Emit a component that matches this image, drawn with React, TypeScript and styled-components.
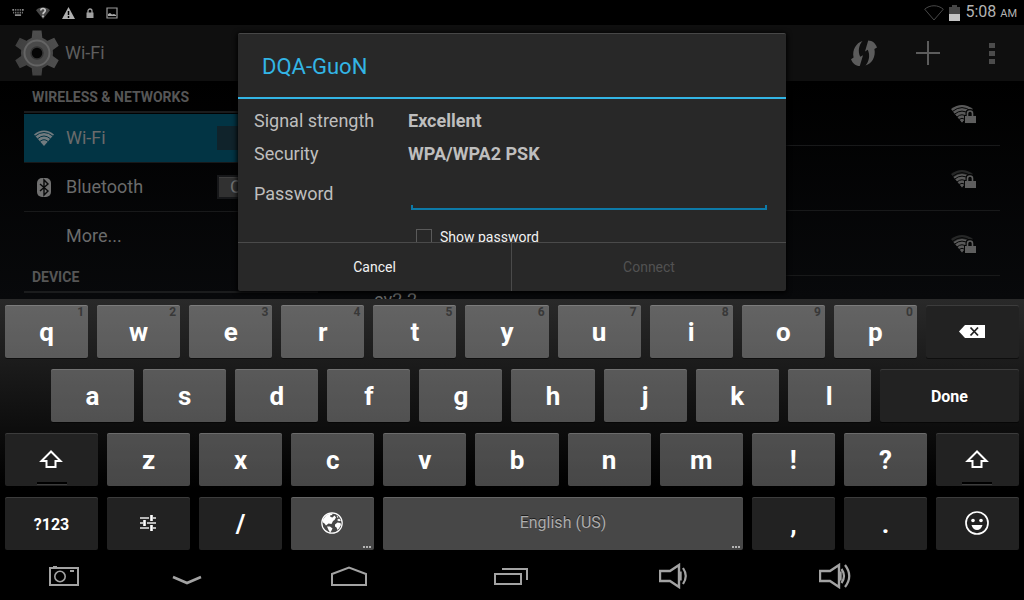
import React from "react";
import styled, { createGlobalStyle, css } from "styled-components";

const GlobalStyle = createGlobalStyle`
  *, *::before, *::after { box-sizing: border-box; }
  body {
    margin: 0;
    background: #000;
    font-family: Roboto, "Liberation Sans", sans-serif;
  }
  button, input { font: inherit; color: inherit; margin: 0; padding: 0; border: 0; background: none; }
  button { cursor: pointer; }
  svg { display: block; flex: none; }
  h1, h2, ul, dl, dd { margin: 0; padding: 0; font-weight: 400; }
  ul { list-style: none; }
`;

/* ---------- page frame ---------- */

const Device = styled.div`
  display: grid;
  grid-template-rows: auto 1fr auto auto;
  grid-template-columns: 100%;
  height: 100vh;
  overflow: hidden;
`;

const StatusBar = styled.header`
  display: flex;
  align-items: center;
  justify-content: space-between;
  height: 25px;
  padding: 0 7px 0 12px;
  color: #b4b4b4;
`;

const StatusGroup = styled.div<{ $gap: number }>`
  display: flex;
  align-items: center;
  gap: ${(p) => p.$gap}px;
`;

const StatusIcons = styled.div`
  display: grid;
  grid-template-columns: 12px 14px 12px 8px 12px;
  column-gap: 12px;
  align-items: center;
  justify-items: center;
`;

const Clock = styled.time`
  padding-top: 1px;
  font-size: 16px;
  line-height: 24px;
  small { font-size: 11px; }
`;

const Screen = styled.div`
  position: relative;
  min-height: 0;
  overflow: hidden;
  background: linear-gradient(#000 56px, #08090b);
`;

const ActionBar = styled.div`
  display: flex;
  align-items: center;
  justify-content: space-between;
  height: 56px;
  padding-left: 15px;
  background: #0f0f0f;
  color: #5e5e5e;
`;

const AppTitle = styled.h1`
  display: flex;
  align-items: center;
  gap: 6px;
  font-size: 18px;
  line-height: 24px;
`;

const Actions = styled.div`
  display: grid;
  grid-template-columns: repeat(3, 64px);
  height: 100%;
`;

const IconButton = styled.button`
  display: flex;
  align-items: center;
  justify-content: center;
`;

const Panes = styled.div`
  display: flex;
  padding: 0 24px;
`;

/* ---------- settings categories ---------- */

const Categories = styled.nav`
  flex: none;
  width: 294px;
`;

const CategoryHeading = styled.h2`
  height: 32px;
  padding: 0 8px;
  border-bottom: 2px solid #1b1c1d;
  color: #565656;
  font-size: 14px;
  font-weight: 700;
  line-height: 32px;
`;

const CategoryList = styled.ul`
  padding-bottom: 1px;
`;

const CategoryItem = styled.li<{ $active?: boolean; $first?: boolean }>`
  display: flex;
  align-items: center;
  justify-content: space-between;
  height: 49px;
  padding-right: 16px;
  border-top: 1px solid ${(p) => (p.$first ? "transparent" : "#18191a")};
  background: ${(p) => (p.$active ? "#023444" : "transparent")};
  background-clip: padding-box;
`;

const CategoryLink = styled.a`
  display: grid;
  grid-template-columns: 42px auto;
  align-items: center;
  color: #6a6b6b;
  font-size: 18px;
  line-height: 24px;
  text-decoration: none;
  svg { justify-self: center; margin-right: 2px; }
`;

const Toggle = styled.button<{ $on?: boolean }>`
  width: 85px;
  height: 24px;
  padding: 2px;
  background: ${(p) => (p.$on ? "#10232b" : "#17181a")};
  font-size: 18px;
  line-height: 20px;
`;

const ToggleThumb = styled.span`
  display: block;
  width: 44px;
  height: 20px;
  padding-left: 11px;
  background: #313131;
  border-top: 1px solid #404040;
  color: #707070;
  text-align: left;
  line-height: 18px;
`;

/* ---------- network list ---------- */

const Networks = styled.ul`
  flex: 1;
  padding-left: 56px;
`;

const Network = styled.li`
  display: flex;
  justify-content: space-between;
  height: 65px;
  padding: 12px 24px 0 0;
  border-bottom: 1px solid #18191a;
  color: #6a6b6b;
  font-size: 18px;
  line-height: 24px;
  svg { margin: 12px 0 0 auto; }
`;

/* ---------- dialog ---------- */

const Overlay = styled.div`
  position: absolute;
  inset: 0;
  display: flex;
  align-items: center;
  justify-content: center;
`;

const Dialog = styled.form`
  width: 548px;
  max-width: 100%;
  background: #282828;
  border-top: 1px solid #474747;
  border-radius: 2px;
  box-shadow: 0 1px 5px 1px #000;
  color: #bebebe;
  font-size: 18px;
  line-height: 24px;
`;

const DialogTitle = styled.h2`
  padding: 18px 24px 15px;
  border-bottom: 2px solid #33b5e5;
  color: #33b5e5;
  font-size: 22px;
  line-height: 30px;
`;

const DialogBody = styled.div`
  height: 143px;
  padding: 5px 16px 0;
  overflow: hidden;
`;

const fieldGrid = css`
  display: grid;
  grid-template-columns: 154px 1fr;
  align-items: center;
`;

const Facts = styled.dl`
  ${fieldGrid}
  grid-auto-rows: 33px;
  dd { font-weight: 700; }
`;

const PasswordRow = styled.div`
  ${fieldGrid}
  height: 48px;
`;

const PasswordInput = styled.input`
  height: 32px;
  margin: 0 3px;
  padding: 0 8px;
  outline: none;
  background:
    linear-gradient(#0d7aa8, #0d7aa8) left bottom / 100% 2px no-repeat,
    linear-gradient(#0d7aa8, #0d7aa8) left bottom / 2px 5px no-repeat,
    linear-gradient(#0d7aa8, #0d7aa8) right bottom / 2px 5px no-repeat;
`;

const ShowPassword = styled.label`
  display: flex;
  align-items: center;
  gap: 8px;
  height: 38px;
  padding-left: 162px;
  color: #f2f2f2;
  font-size: 14px;
`;

const Checkbox = styled.input`
  appearance: none;
  width: 16px;
  height: 16px;
  border: 1px solid #5a5a5a;
`;

const DialogButtons = styled.div`
  display: grid;
  grid-template-columns: 1fr 1fr;
  border-top: 1px solid #4a4a4a;
`;

const DialogButton = styled.button`
  height: 48px;
  color: #f2f2f2;
  font-size: 14px;
  &:first-child { border-right: 1px solid #4a4a4a; }
  &:disabled { color: #525252; cursor: default; }
`;

/* ---------- keyboard ---------- */

const Keyboard = styled.section`
  display: flex;
  flex-direction: column;
  gap: 11px;
  padding: 6px 5px 2px;
  background: linear-gradient(#292929, #000 190px);
`;

const KeyRow = styled.div<{ $indent?: boolean }>`
  display: flex;
  gap: 9px;
  padding-left: ${(p) => (p.$indent ? 46 : 0)}px;
`;

type KeyLook = { $weight?: number; $dark?: boolean; $small?: boolean };

const KeyCap = styled.button<KeyLook>`
  position: relative;
  display: flex;
  flex: ${(p) => p.$weight ?? 83} 1 0;
  align-items: center;
  justify-content: center;
  min-width: 0;
  height: 53px;
  border-radius: 2px;
  background: ${(p) => (p.$dark ? "#222" : "rgba(255, 255, 255, 0.28)")};
  box-shadow:
    inset 0 1px 0 rgba(255, 255, 255, ${(p) => (p.$dark ? 0.12 : 0.16)}),
    0 1px 0 rgba(0, 0, 0, 0.5);
  color: #fff;
  font-size: ${(p) => (p.$small ? 16 : 26)}px;
  font-weight: 700;
  line-height: 30px;
  padding-top: ${(p) => (p.$small ? 2 : 0)}px;
  svg { margin: 0 1px 1px 0; }
`;

const KeyHint = styled.span`
  position: absolute;
  top: 0;
  right: 4px;
  color: #383838;
  font-size: 12px;
  line-height: 14px;
`;

const LongPressDots = styled.span`
  position: absolute;
  right: 3px;
  bottom: 2px;
  display: flex;
  gap: 1px;
  &::before, &::after { content: ""; }
  &::before, &::after, i { width: 2px; height: 2px; background: #b4b4b4; }
`;

const ShiftMark = styled.span`
  position: absolute;
  bottom: 1px;
  left: 50%;
  width: 30px;
  height: 3px;
  margin-left: -15px;
  background: #000;
  border-bottom: 1px solid #3c3c3c;
`;

const SpaceLabel = styled.span`
  padding-bottom: 2px;
  color: #acacac;
  font-size: 16px;
  font-weight: 400;
  text-shadow: 0 -1px 0 #1c1c1c;
`;

/* ---------- navigation bar ---------- */

const NavBar = styled.nav`
  display: grid;
  grid-template-columns: 85fr repeat(5, 162fr);
  height: 48px;
  padding: 0 108px 0 21px;
  color: #a3a3a3;
`;

/* ---------- icons ---------- */

const GearIcon = () => (
  <svg width="44" height="46" viewBox="0 0 44 46" aria-hidden="true">
    <defs>
      <linearGradient id="gear" gradientUnits="userSpaceOnUse" x1="0" y1="0" x2="0" y2="46">
        <stop offset="0" stopColor="#4e4e4e" />
        <stop offset="1" stopColor="#404040" />
      </linearGradient>
      <path id="teeth" d="M17.500 .500h9l1 9h-11zM17.500 45.500h9l1-9h-11z" />
    </defs>
    <g fill="url(#gear)">
      <circle cx="22" cy="23" r="16" />
      <use href="#teeth" />
      <use href="#teeth" transform="rotate(60 22 23)" />
      <use href="#teeth" transform="rotate(120 22 23)" />
    </g>
    <circle cx="22" cy="23" r="12.500" fill="#4a4a4a" stroke="#646464" strokeWidth="2" />
    <circle cx="22" cy="23" r="6" fill="#050505" stroke="#333" strokeWidth="1.500" />
  </svg>
);

const KeyboardIcon = () => (
  <svg width="12" height="7" viewBox="0 0 13 8" aria-hidden="true" fill="#8a8a8a">
    <path d="M0 0h2v2H0zM3 0h1v2H3zM5 0h1v2H5zM7 0h1v2H7zM9 0h1v2H9zM11 0h2v2h-2zM1 3h1v2H1zM3 3h1v2H3zM5 3h1v2H5zM7 3h1v2H7zM9 3h1v2H9zM11 3h1v2h-1zM3 6h7v2H3z" />
  </svg>
);

const WifiQuestionIcon = () => (
  <svg width="14" height="12" viewBox="0 0 14 12" aria-hidden="true">
    <path d="M0 3.200C4-.600 10-.600 14 3.200L7 12z" fill="#484848" />
    <path d="M4.800 3.500C4.800 .800 9.200 .800 9.200 3.500 9.200 5.300 7 5.200 7 7.200M7 8.400v1.800" fill="none" stroke="#c4c4c4" strokeWidth="1.700" />
  </svg>
);

const WarningIcon = () => (
  <svg width="13" height="12" viewBox="0 0 13 12" aria-hidden="true">
    <path d="M6.500 0L13 12H0z" fill="#b0b0b0" />
    <path d="M6.500 4v4M6.500 9v2" stroke="#000" strokeWidth="1.500" />
  </svg>
);

const LockIcon = () => (
  <svg width="8" height="10" viewBox="0 0 8 10" aria-hidden="true">
    <path d="M2 5V3a2 2 0 0 1 4 0v2" fill="none" stroke="#a0a0a0" strokeWidth="1.300" />
    <path d="M.500 4.500h7V10h-7z" fill="#a0a0a0" />
  </svg>
);

const PictureIcon = () => (
  <svg width="12" height="12" viewBox="0 0 12 12" aria-hidden="true">
    <path d="M1 1h10v10H1z" fill="none" stroke="#9a9a9a" strokeWidth="1.200" />
    <path d="M2 9V7l2-1 2 1.500L8 7l2 1v1z" fill="#a8a8a8" />
  </svg>
);

const WifiOutlineIcon = () => (
  <svg width="20" height="16" viewBox="0 0 20 16" aria-hidden="true">
    <path d="M.700 4.200C6-.400 14-.400 19.300 4.200L10 15z" fill="none" stroke="#484848" />
  </svg>
);

const BatteryIcon = () => (
  <svg width="11" height="16" viewBox="0 0 11 16" aria-hidden="true">
    <path d="M3 0h5v2h3v7H0V2h3z" fill="#454545" />
    <path d="M0 9h11v7H0z" fill="#c2c2c2" />
  </svg>
);

const WpsIcon = () => (
  <svg width="27" height="27" viewBox="0 0 27 27" aria-hidden="true" fill="#5c5c5c">
    <path id="swoosh" d="M11.500 1C5 3 1 10 2.600 17.600L0 19.200C1.800 23.600 4.600 25.800 8.800 26L12 15.200 9.200 16.800C6.600 11 8 5 11.500 1z" />
    <use href="#swoosh" transform="rotate(180 13 13.300)" />
  </svg>
);

const PlusIcon = () => (
  <svg width="24" height="24" viewBox="0 0 24 24" aria-hidden="true">
    <path d="M12 0v24M0 12h24" stroke="#5c5c5c" strokeWidth="2" />
  </svg>
);

const OverflowIcon = () => (
  <svg width="6" height="21" viewBox="0 0 6 21" aria-hidden="true" fill="#4c4c4c">
    <path d="M0 0h6v5H0zM0 8h6v5H0zM0 16h6v5H0z" />
  </svg>
);

const WifiIcon = () => (
  <svg width="20" height="16" viewBox="0 0 20 16" aria-hidden="true">
    <path d="M0 4.500C6-1 14-1 20 4.500L10 16z" fill="#727b7f" />
    <path d="M1 6.200Q10-1.200 19 6.200M3.500 8.800Q10 3.200 16.500 8.800M6 11.400Q10 8 14 11.400" fill="none" stroke="#023444" />
  </svg>
);

const BluetoothIcon = () => (
  <svg width="14" height="19" viewBox="0 0 14 19" aria-hidden="true">
    <rect width="14" height="19" rx="5" fill="#707070" />
    <path d="M3 6l8 7-4 4V2l4 4-8 7" fill="none" stroke="#08090a" strokeWidth="1.400" />
  </svg>
);

const SecuredWifiIcon = ({ weak }: { weak?: boolean }) => (
  <svg width="25" height="19" viewBox="0 0 25 19" aria-hidden="true">
    <path d="M0 4Q11-4 22 4L11 17.500z" fill={weak ? "#262727" : "#5a5a5a"} />
    <path d="M2.500 7Q11 .800 19.500 7L11 17.500z" fill="#5a5a5a" />
    <path d="M1.500 6.400Q11-1.200 20.500 6.400M3.500 9.200Q11 3 18.500 9.200M6 12Q11 7.500 16 12M8 14.500Q11 12 14 14.500" fill="none" stroke="#050606" />
    <path d="M13 19v-9h1.500V8q0-4 4.500-4t4.500 4v2H25v9z" fill="#050606" />
    <path d="M16.500 12V8.500a2.500 2.500 0 0 1 5 0V12" fill="none" stroke="#5e5e5e" strokeWidth="1.600" />
    <path d="M14 11h11v7H14z" fill="#5e5e5e" />
  </svg>
);

const BackspaceIcon = () => (
  <svg width="26" height="13" viewBox="0 0 26 13" aria-hidden="true">
    <path d="M0 6.500L6 0h20v13H6z" fill="#fff" />
    <path d="M11.500 2.500l7.500 8M19 2.500l-7.500 8" stroke="#222" strokeWidth="1.800" />
  </svg>
);

const ShiftIcon = () => (
  <svg width="24" height="18" viewBox="0 0 24 18" aria-hidden="true">
    <path d="M12 1.500L2.500 11H7.500v6h9v-6h5z" fill="none" stroke="#fff" strokeWidth="2" />
  </svg>
);

const SlidersIcon = () => (
  <svg width="16" height="16" viewBox="0 0 16 16" aria-hidden="true">
    <path d="M0 3h9M13 3h3M0 8h3M7 8h9M0 13h9M13 13h3" stroke="#b8b8b8" strokeWidth="2" />
    <path d="M11.500 0v6M4.500 5v6M11.500 10v6" stroke="#fff" strokeWidth="2.600" />
  </svg>
);

const GlobeIcon = () => (
  <svg width="22" height="22" viewBox="0 0 22 22" aria-hidden="true">
    <circle cx="11" cy="11" r="10.200" fill="none" stroke="#fff" strokeWidth="1.200" />
    <path
      fill="#fff"
      d="M2 7.500L5 3.500 8.500 1.500 12 1.200 11 3 9 3.500 9.500 5 11.500 5.500 13.500 3.500 15 5.500 13.500 8 12 9 10.500 12 7.500 11.500 5 13.500 3.500 11.500 2 10.500zM6 14.500L9 14.500 11.500 16.500 10 19.500 9 20.500 7.500 18zM14 12.500L16.500 10.500 19.500 11 20 13 18 16.500 16.500 18 15.500 15.500 14 14.500zM15.500 3.500L17.500 5 16.500 6zM16 8l2-1.500L20 8.500 18 9.200z"
    />
  </svg>
);

const SmileyIcon = () => (
  <svg width="24" height="24" viewBox="0 0 24 24" aria-hidden="true" fill="#fff">
    <circle cx="12" cy="12" r="11" fill="none" stroke="#fff" strokeWidth="1.700" />
    <circle cx="8" cy="9.500" r="1.800" />
    <circle cx="16" cy="9.500" r="1.800" />
    <path d="M6.500 14h11q-1.500 5-5.500 5t-5.500-5z" />
  </svg>
);

const CameraIcon = () => (
  <svg width="30" height="20" viewBox="0 0 30 20" aria-hidden="true" fill="none" stroke="currentColor">
    <path d="M1 2h28v17H1z" strokeWidth="2" />
    <path d="M4 .500h4" />
    <circle cx="11" cy="10.500" r="5.200" strokeWidth="1.600" />
    <path d="M21 5h4" strokeWidth="2" />
  </svg>
);

const HideIcon = () => (
  <svg width="30" height="26" viewBox="0 0 30 26" aria-hidden="true" fill="none" stroke="currentColor">
    <path d="M1 14l14 6 14-6" strokeWidth="2.600" />
  </svg>
);

const HomeIcon = () => (
  <svg width="36" height="20" viewBox="0 0 36 20" aria-hidden="true" fill="none" stroke="currentColor">
    <path d="M1 19V8L18 1.500l17 6.500v11z" strokeWidth="2" />
  </svg>
);

const RecentsIcon = () => (
  <svg width="34" height="17" viewBox="0 0 34 17" aria-hidden="true" fill="none" stroke="currentColor">
    <path d="M1 6h26v10H1z" strokeWidth="2" />
    <path d="M8 1h25v11" strokeWidth="2" />
  </svg>
);

const VolumeIcon = ({ loud }: { loud?: boolean }) => (
  <svg width={loud ? 32 : 28} height="26" viewBox={loud ? "0 0 32 26" : "0 0 28 26"} aria-hidden="true" fill="none" stroke="currentColor">
    <path d="M1 8h10l9-6v22l-9-6H1z" strokeWidth="2.400" />
    <path d="M21.500 8.500v9" strokeWidth="2.400" />
    <path d={loud ? "M22.500 6q5 7 0 14M26 2q8.500 11 0 22" : "M24 5q5.500 8 0 16"} strokeWidth="2.200" />
  </svg>
);

/* ---------- app ---------- */

const topRow = "qwertyuiop".split("");
const homeRow = "asdfghjkl".split("");
const bottomRow = "zxcvbnm!?".split("");

const networks = [
  { id: 1, weak: false },
  { id: 2, weak: true },
  { id: 3, weak: true },
  { id: 4, weak: true, name: "ev2.2" },
];

const Dots = () => (
  <LongPressDots>
    <i />
  </LongPressDots>
);

export default function App() {
  return (
    <Device>
      <GlobalStyle />
      <StatusBar>
        <StatusIcons>
          <KeyboardIcon />
          <WifiQuestionIcon />
          <WarningIcon />
          <LockIcon />
          <PictureIcon />
        </StatusIcons>
        <StatusGroup $gap={5}>
          <WifiOutlineIcon />
          <BatteryIcon />
          <Clock>
            5:08 <small>AM</small>
          </Clock>
        </StatusGroup>
      </StatusBar>

      <Screen>
        <ActionBar>
          <AppTitle>
            <GearIcon />
            Wi-Fi
          </AppTitle>
          <Actions>
            <IconButton aria-label="WPS"><WpsIcon /></IconButton>
            <IconButton aria-label="Add network"><PlusIcon /></IconButton>
            <IconButton aria-label="More options"><OverflowIcon /></IconButton>
          </Actions>
        </ActionBar>

        <Panes>
          <Categories>
            <CategoryHeading>WIRELESS &amp; NETWORKS</CategoryHeading>
            <CategoryList>
              <CategoryItem $first $active>
                <CategoryLink href="#wifi"><WifiIcon />Wi-Fi</CategoryLink>
                <Toggle $on role="switch" aria-checked="true" aria-label="Wi-Fi" />
              </CategoryItem>
              <CategoryItem>
                <CategoryLink href="#bluetooth"><BluetoothIcon />Bluetooth</CategoryLink>
                <Toggle role="switch" aria-checked="false" aria-label="Bluetooth">
                  <ToggleThumb>O</ToggleThumb>
                </Toggle>
              </CategoryItem>
              <CategoryItem>
                <CategoryLink href="#more"><span />More...</CategoryLink>
              </CategoryItem>
            </CategoryList>
            <CategoryHeading>DEVICE</CategoryHeading>
          </Categories>
          <Networks>
            {networks.map((n) => (
              <Network key={n.id}>
                {n.name}
                <SecuredWifiIcon weak={n.weak} />
              </Network>
            ))}
          </Networks>
        </Panes>

        <Overlay>
          <Dialog role="dialog" aria-labelledby="ssid" onSubmit={(e) => e.preventDefault()}>
            <DialogTitle id="ssid">DQA-GuoN</DialogTitle>
            <DialogBody>
              <Facts>
                <dt>Signal strength</dt>
                <dd>Excellent</dd>
                <dt>Security</dt>
                <dd>WPA/WPA2 PSK</dd>
              </Facts>
              <PasswordRow>
                <label htmlFor="password">Password</label>
                <PasswordInput id="password" type="password" />
              </PasswordRow>
              <ShowPassword>
                <Checkbox type="checkbox" />
                Show password
              </ShowPassword>
            </DialogBody>
            <DialogButtons>
              <DialogButton type="button">Cancel</DialogButton>
              <DialogButton type="submit" disabled>Connect</DialogButton>
            </DialogButtons>
          </Dialog>
        </Overlay>
      </Screen>

      <Keyboard aria-label="Keyboard">
        <KeyRow>
          {topRow.map((k, i) => (
            <KeyCap key={k}>
              {k}
              <KeyHint>{(i + 1) % 10}</KeyHint>
            </KeyCap>
          ))}
          <KeyCap $dark $weight={93} aria-label="Backspace"><BackspaceIcon /></KeyCap>
        </KeyRow>
        <KeyRow $indent>
          {homeRow.map((k) => <KeyCap key={k}>{k}</KeyCap>)}
          <KeyCap $dark $small $weight={139}>Done</KeyCap>
        </KeyRow>
        <KeyRow>
          <KeyCap $dark $weight={93} aria-label="Shift"><ShiftIcon /><ShiftMark /></KeyCap>
          {bottomRow.map((k) => <KeyCap key={k}>{k}</KeyCap>)}
          <KeyCap $dark aria-label="Right shift"><ShiftIcon /><ShiftMark /></KeyCap>
        </KeyRow>
        <KeyRow>
          <KeyCap $dark $small $weight={93}>?123</KeyCap>
          <KeyCap $dark aria-label="Input options"><SlidersIcon /></KeyCap>
          <KeyCap $dark>/</KeyCap>
          <KeyCap aria-label="Language"><GlobeIcon /><Dots /></KeyCap>
          <KeyCap $weight={360}><SpaceLabel>English (US)</SpaceLabel><Dots /></KeyCap>
          <KeyCap $dark>,</KeyCap>
          <KeyCap $dark>.</KeyCap>
          <KeyCap $dark aria-label="Emoji"><SmileyIcon /></KeyCap>
        </KeyRow>
      </Keyboard>

      <NavBar>
        <IconButton aria-label="Screenshot"><CameraIcon /></IconButton>
        <IconButton aria-label="Hide keyboard"><HideIcon /></IconButton>
        <IconButton aria-label="Home"><HomeIcon /></IconButton>
        <IconButton aria-label="Recent apps"><RecentsIcon /></IconButton>
        <IconButton aria-label="Volume down"><VolumeIcon /></IconButton>
        <IconButton aria-label="Volume up"><VolumeIcon loud /></IconButton>
      </NavBar>
    </Device>
  );
}
